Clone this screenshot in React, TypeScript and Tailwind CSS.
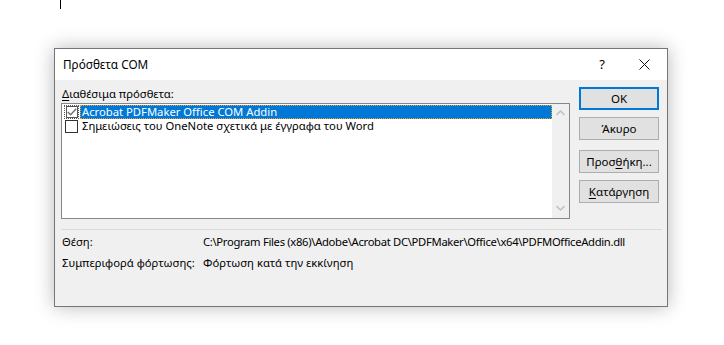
import type { ReactNode } from "react"

function DlgButton({ children, primary }: { children: ReactNode; primary?: boolean }) {
  return (
    <button
      className={
        primary
          ? "h-[23px] w-[80px] border-2 border-[#0078d7] bg-[#e1e1e1] text-[11.5px] leading-[19px] text-black"
          : "h-[23px] w-[80px] border border-[#adadad] bg-[#e1e1e1] text-[11.5px] leading-[21px] text-black"
      }
    >
      {children}
    </button>
  )
}

function Chevron({ up }: { up?: boolean }) {
  return (
    <svg width="9" height="6" viewBox="0 0 9 6" className="block">
      <path
        d={up ? "M0.5 5 L4.5 1 L8.5 5" : "M0.5 1 L4.5 5 L8.5 1"}
        fill="none"
        stroke="#c2c2c2"
        strokeWidth="1.6"
      />
    </svg>
  )
}

export default function App() {
  return (
    <div className="h-[345px] w-[724px] overflow-hidden bg-white font-['Noto_Sans','Open_Sans',sans-serif] text-[11.25px] text-black">
      <div className="ml-[60px] h-[9px] w-px bg-black" />

      <div className="ml-[54px] mt-[39px] w-[614px] border border-[#767676] shadow-[0_0_18px_rgba(0,0,0,0.28)]">
        {/* title bar */}
        <div className="flex h-[31px] items-center bg-white pl-[8px]">
          <span className="text-[11.75px] leading-none">Πρόσθετα COM</span>
          <span className="ml-auto mr-[34px] text-[13px] leading-none">?</span>
          <svg width="11" height="11" viewBox="0 0 11 11" className="mr-[17px]">
            <path d="M0.5 0.5 L10.5 10.5 M10.5 0.5 L0.5 10.5" stroke="#111" strokeWidth="1" />
          </svg>
        </div>

        {/* body */}
        <div className="h-[226px] bg-[#f0f0f0] px-[6px] pt-[7px]">
          <div className="flex gap-[9px]">
            <div className="w-[509px]">
              <div className="h-[16px] whitespace-nowrap pl-px leading-[13px]">
                <span className="underline underline-offset-2">Δ</span>ιαθέσιμα πρόσθετα:
              </div>
              <div className="flex h-[116px] border border-[#828790] bg-white">
                <div className="flex-1 pt-px">
                  <div className="flex h-[14px] items-center">
                    <div className="ml-[2px] flex h-[14px] w-[15px] items-center justify-center outline-1 -outline-offset-1 outline-dotted outline-[#555]">
                      <div className="flex h-[12px] w-[12px] items-center justify-center border border-[#555] bg-white">
                        <svg width="10" height="8" viewBox="0 0 10 8">
                          <path d="M0.8 4 L3.6 6.8 L9.2 0.8" fill="none" stroke="#707070" strokeWidth="1.4" />
                        </svg>
                      </div>
                    </div>
                    <div className="ml-px flex h-[14px] flex-1 items-center whitespace-nowrap bg-[#0078d7] pl-[2px] leading-none text-white outline-1 -outline-offset-1 outline-dotted outline-[#f29b25]">
                      Acrobat PDFMaker Office COM Addin
                    </div>
                  </div>
                  <div className="flex h-[14px] items-center">
                    <div className="ml-[3px] h-[13px] w-[13px] border border-[#333] bg-white" />
                    <div className="ml-[2px] whitespace-nowrap pl-[2px] leading-none">
                      Σημειώσεις του OneNote σχετικά με έγγραφα του Word
                    </div>
                  </div>
                </div>
                <div className="flex w-[17px] flex-col items-center justify-between bg-[#f0f0f0] pb-[7px] pt-[6px]">
                  <Chevron up />
                  <Chevron />
                </div>
              </div>
            </div>

            <div className="flex flex-col">
              <DlgButton primary>OK</DlgButton>
              <div className="mt-[7px]">
                <DlgButton>Άκυρο</DlgButton>
              </div>
              <div className="mt-[10px]">
                <DlgButton>
                  Προσ<span className="underline underline-offset-2">θ</span>ήκη...
                </DlgButton>
              </div>
              <div className="mt-[7px]">
                <DlgButton>
                  <span className="underline underline-offset-2">Κ</span>ατάργηση
                </DlgButton>
              </div>
            </div>
          </div>

          <div className="mt-[10px] h-px w-[601px] bg-[#dadada]" />

          <div className="mt-[5px] grid grid-cols-[141px_1fr] gap-y-[7px] whitespace-nowrap pl-px leading-[14px]">
            <div>Θέση:</div>
            <div className="tracking-[-0.32px]">
              C:\Program Files (x86)\Adobe\Acrobat DC\PDFMaker\Office\x64\PDFMOfficeAddin.dll
            </div>
            <div>Συμπεριφορά φόρτωσης:</div>
            <div>Φόρτωση κατά την εκκίνηση</div>
          </div>
        </div>
      </div>
    </div>
  )
}
